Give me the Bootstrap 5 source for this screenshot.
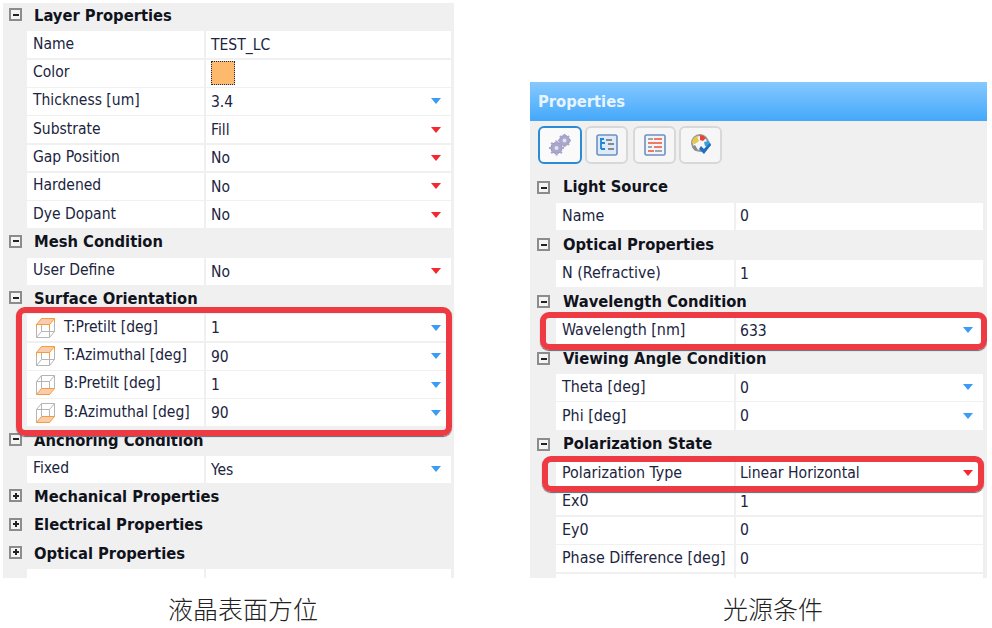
<!DOCTYPE html>
<html lang="en">
<head>
  <meta charset="UTF-8">
  <title>Properties</title>
  <link href="https://cdn.jsdelivr.net/npm/bootstrap@5.3.3/dist/css/bootstrap.min.css" rel="stylesheet">
  <style>
    body { width: 992px; height: 628px; overflow: hidden; background: #fff; color: #1b2440; font-family: "DejaVu Sans Condensed", "DejaVu Sans", sans-serif; font-size: 15.5px; }
    .left-col { width: 451px; margin: 3px 0 0 3px; }
    .right-col { width: 457px; margin: 82px 0 0 76px; }
    .grid-panel { background: #f0f0f0; overflow: hidden; position: relative; }
    .left-col .grid-panel { height: 575px; padding: 0 3px 0 24px; }
    .right-col .grid-panel { height: 496px; padding: 0 4px 0 26px; }
    .prop-head, .prop-row { height: 28.32px; }
    .right-col .prop-head, .right-col .prop-row { height: 28.55px; }
    .prop-head { position: relative; font-weight: 700; color: #10131c; font-size: 16.4px; padding: 0 0 2px 7px; }
    .right-col .prop-head { padding-bottom: 1px; }
    .prop-row { padding-bottom: 1.4px; }
    .prop-name { width: 177px; background: #fff; padding: 0 0 1px 6px; height: 100%; }
    .prop-val { flex: 1; margin-left: 2px; background: #fff; padding: 2px 10px 0 5px; height: 100%; }
    .right-col .prop-name { width: 178px; font-size: 15.9px; }
    .right-col .prop-val { padding-left: 4px; font-size: 15.6px; }
    .expander { position: absolute; left: -18px; top: 5px; width: 13px; height: 13px; border: 2px solid #8c8c8c; background: #f4f4f4; }
    .right-col .expander { left: -19px; top: 7px; }
    .expander::before { content: ""; position: absolute; left: 1.5px; right: 1.5px; top: 3.5px; height: 2px; background: #222; }
    .expander.closed::after { content: ""; position: absolute; left: 3.5px; top: 1.5px; bottom: 1.5px; width: 2px; background: #222; }
    .drop-blue, .drop-red { width: 0; height: 0; border-left: 5.5px solid transparent; border-right: 5.5px solid transparent; margin: 0 0 2px auto; }
    .drop-blue { border-top: 6px solid #3a9cf6; }
    .drop-red { border-top: 6px solid #f6282e; }
    .swatch { width: 24px; height: 24px; margin-top: -2px; background: #fdb96c; border: 1px dotted #1d2a55; }
    .cube { width: 21px; height: 22px; margin: 1px 8px 0 2px; flex: none; }
    .panel-title { height: 39px; background: linear-gradient(#86c9ff, #44a8fb); color: #e8f4ff; font-weight: 700; font-size: 16.4px; padding: 2px 0 0 8px; margin: 0 -4px 0 -26px; }
    .tool-strip { height: 53px; margin-left: -18px; padding-top: 5px; gap: 3px; }
    .tool-btn { width: 43px; height: 38px; background: #f6f6f6; border: 2px solid #d8d8d8; border-radius: 6px; }
    .tool-btn.on { width: 44px; background: #fafafa; border-color: #2a8bd8; }
    .tool-gap { margin-left: 2px; }
    .red-frame { position: absolute; border: 6.5px solid #ee3a43; border-radius: 9px; box-shadow: 0 1px 1px #667; pointer-events: none; }
    .frame-a { left: 13px; top: 304px; width: 436px; height: 129px; }
    .frame-b { left: 10px; top: 230px; width: 447px; height: 38px; }
    .frame-c { left: 12px; top: 374px; width: 442px; height: 36px; }
    .img-caption { font-family: "Liberation Serif", "Noto Sans CJK SC", serif; font-weight: 300; font-size: 25px; line-height: 1; color: #222; text-align: center; margin-top: 20px; padding-left: 29px; }
  </style>
</head>
<body>
<div class="d-flex">

  <div class="left-col">
    <div class="grid-panel">
      <div class="prop-head d-flex align-items-center"><span class="expander"></span>Layer Properties</div>
      <div class="prop-row d-flex"><div class="prop-name d-flex align-items-center">Name</div><div class="prop-val d-flex align-items-center">TEST_LC</div></div>
      <div class="prop-row d-flex"><div class="prop-name d-flex align-items-center">Color</div><div class="prop-val d-flex align-items-center"><span class="swatch"></span></div></div>
      <div class="prop-row d-flex"><div class="prop-name d-flex align-items-center">Thickness [um]</div><div class="prop-val d-flex align-items-center">3.4<span class="drop-blue"></span></div></div>
      <div class="prop-row d-flex"><div class="prop-name d-flex align-items-center">Substrate</div><div class="prop-val d-flex align-items-center">Fill<span class="drop-red"></span></div></div>
      <div class="prop-row d-flex"><div class="prop-name d-flex align-items-center">Gap Position</div><div class="prop-val d-flex align-items-center">No<span class="drop-red"></span></div></div>
      <div class="prop-row d-flex"><div class="prop-name d-flex align-items-center">Hardened</div><div class="prop-val d-flex align-items-center">No<span class="drop-red"></span></div></div>
      <div class="prop-row d-flex"><div class="prop-name d-flex align-items-center">Dye Dopant</div><div class="prop-val d-flex align-items-center">No<span class="drop-red"></span></div></div>
      <div class="prop-head d-flex align-items-center"><span class="expander"></span>Mesh Condition</div>
      <div class="prop-row d-flex"><div class="prop-name d-flex align-items-center">User Define</div><div class="prop-val d-flex align-items-center">No<span class="drop-red"></span></div></div>
      <div class="prop-head d-flex align-items-center"><span class="expander"></span>Surface Orientation</div>
      <div class="prop-row d-flex"><div class="prop-name d-flex align-items-center">
        <svg class="cube" viewBox="0 0 21 22" fill="none" stroke-width="1"><path d="M1.5 7.5h13v13h-13zM6.5 1.5v13M1.5 20.5l5-6h13M14.5 20.5l5-6V1.5" stroke="#b5b5b5"/><path d="M1.5 7.5l5-6h13l-5 6z" fill="#f6cdb0" stroke="#fb9a3c"/><path d="M1.5 7.5v4M14.5 7.5v4M19.5 1.5v4" stroke="#fb9a3c"/></svg>
        T:Pretilt [deg]</div><div class="prop-val d-flex align-items-center">1<span class="drop-blue"></span></div></div>
      <div class="prop-row d-flex"><div class="prop-name d-flex align-items-center">
        <svg class="cube" viewBox="0 0 21 22" fill="none" stroke-width="1"><path d="M1.5 7.5h13v13h-13zM6.5 1.5v13M1.5 20.5l5-6h13M14.5 20.5l5-6V1.5" stroke="#b5b5b5"/><path d="M1.5 7.5l5-6h13l-5 6z" fill="#f6cdb0" stroke="#fb9a3c"/><path d="M1.5 7.5v4M14.5 7.5v4M19.5 1.5v4" stroke="#fb9a3c"/></svg>
        T:Azimuthal [deg]</div><div class="prop-val d-flex align-items-center">90<span class="drop-blue"></span></div></div>
      <div class="prop-row d-flex"><div class="prop-name d-flex align-items-center">
        <svg class="cube" viewBox="0 0 21 22" fill="none" stroke-width="1"><path d="M1.5 7.5h13v13M1.5 20.5v-13l5-6h13v13M6.5 1.5v13M14.5 7.5l5-6" stroke="#b5b5b5"/><path d="M1.5 20.5l5-6h13l-5 6z" fill="#f6cdb0" stroke="#fb9a3c"/></svg>
        B:Pretilt [deg]</div><div class="prop-val d-flex align-items-center">1<span class="drop-blue"></span></div></div>
      <div class="prop-row d-flex"><div class="prop-name d-flex align-items-center">
        <svg class="cube" viewBox="0 0 21 22" fill="none" stroke-width="1"><path d="M1.5 7.5h13v13M1.5 20.5v-13l5-6h13v13M6.5 1.5v13M14.5 7.5l5-6" stroke="#b5b5b5"/><path d="M1.5 20.5l5-6h13l-5 6z" fill="#f6cdb0" stroke="#fb9a3c"/></svg>
        B:Azimuthal [deg]</div><div class="prop-val d-flex align-items-center">90<span class="drop-blue"></span></div></div>
      <div class="prop-head d-flex align-items-center"><span class="expander"></span>Anchoring Condition</div>
      <div class="prop-row d-flex"><div class="prop-name d-flex align-items-center">Fixed</div><div class="prop-val d-flex align-items-center">Yes<span class="drop-blue"></span></div></div>
      <div class="prop-head d-flex align-items-center"><span class="expander closed"></span>Mechanical Properties</div>
      <div class="prop-head d-flex align-items-center"><span class="expander closed"></span>Electrical Properties</div>
      <div class="prop-head d-flex align-items-center"><span class="expander closed"></span>Optical Properties</div>
      <div class="prop-row d-flex"><div class="prop-name"></div><div class="prop-val"></div></div>
      <div class="red-frame frame-a"></div>
    </div>
    <div class="img-caption">液晶表面方位</div>
  </div>

  <div class="right-col">
    <div class="grid-panel">
      <div class="panel-title d-flex align-items-center">Properties</div>
      <div class="tool-strip d-flex">
        <div class="tool-btn on d-flex align-items-center justify-content-center">
          <svg width="24" height="24" viewBox="0 0 24 24"><g fill="#a9a7cc" stroke="#8f8db5" stroke-width="1"><circle cx="8.5" cy="15" r="5.5"/><circle cx="16.5" cy="7.5" r="5"/></g><g stroke="#a9a7cc" stroke-width="2.2"><path d="M8.5 7.5v15M1 15h15M3.2 9.7l10.6 10.6M13.8 9.7L3.2 20.3M16.5 1v13M10 7.5h13M12 3l9 9M21 3l-9 9"/></g><circle cx="8.5" cy="15" r="2" fill="#e4e4f0"/><circle cx="16.5" cy="7.5" r="2" fill="#e4e4f0"/></svg>
        </div>
        <div class="tool-btn d-flex align-items-center justify-content-center">
          <svg width="22" height="22" viewBox="0 0 22 22" fill="none"><rect x="1" y="1" width="20" height="20" rx="2" fill="#dcebfa" stroke="#6f8fc4" stroke-width="1.6"/><path d="M5 5v10M5 9h4M5 15h4" stroke="#1f86d8" stroke-width="1.8"/><path d="M4 5h4" stroke="#1f86d8" stroke-width="2"/><path d="M10 6h6M12 10h6M12 15h6" stroke="#8a8a8a" stroke-width="2"/></svg>
        </div>
        <div class="tool-btn tool-gap d-flex align-items-center justify-content-center">
          <svg width="22" height="22" viewBox="0 0 22 22" fill="none"><rect x="1" y="1" width="20" height="20" rx="1.5" fill="#f1f5fb" stroke="#6f8fc4" stroke-width="1.6"/><path d="M4 5h5M4 13h4M11 17h7" stroke="#8a8a8a" stroke-width="1.6"/><path d="M10 5h8M4 9h14M10 13h8M4 17h6" stroke="#f0522f" stroke-width="1.6"/></svg>
        </div>
        <div class="tool-btn d-flex align-items-center justify-content-center">
          <svg width="24" height="24" viewBox="0 0 24 24" fill="none"><circle cx="11" cy="10" r="8" stroke="#9a9a9a" stroke-width="2"/><path d="M3 10a8 8 0 0 1 5-7l2 5-4 3z" fill="#e8c84a"/><path d="M11 2a8 8 0 0 1 6 3l-3 3-3-1z" fill="#ee4136"/><path d="M6 12l3 5-3 1-3-4z" fill="#8c8c8c"/><path d="M15 9l5-1 2 4-2 2-4-1z" fill="#3aa0dc"/><path d="M12 13l3 3 6-6 1 2-7 9-5-5z" fill="#1f6fc0"/></svg>
        </div>
      </div>
      <div class="prop-head d-flex align-items-center"><span class="expander"></span>Light Source</div>
      <div class="prop-row d-flex"><div class="prop-name d-flex align-items-center">Name</div><div class="prop-val d-flex align-items-center">0</div></div>
      <div class="prop-head d-flex align-items-center"><span class="expander"></span>Optical Properties</div>
      <div class="prop-row d-flex"><div class="prop-name d-flex align-items-center">N (Refractive)</div><div class="prop-val d-flex align-items-center">1</div></div>
      <div class="prop-head d-flex align-items-center"><span class="expander"></span>Wavelength Condition</div>
      <div class="prop-row d-flex"><div class="prop-name d-flex align-items-center">Wavelength [nm]</div><div class="prop-val d-flex align-items-center">633<span class="drop-blue"></span></div></div>
      <div class="prop-head d-flex align-items-center"><span class="expander"></span>Viewing Angle Condition</div>
      <div class="prop-row d-flex"><div class="prop-name d-flex align-items-center">Theta [deg]</div><div class="prop-val d-flex align-items-center">0<span class="drop-blue"></span></div></div>
      <div class="prop-row d-flex"><div class="prop-name d-flex align-items-center">Phi [deg]</div><div class="prop-val d-flex align-items-center">0<span class="drop-blue"></span></div></div>
      <div class="prop-head d-flex align-items-center"><span class="expander"></span>Polarization State</div>
      <div class="prop-row d-flex"><div class="prop-name d-flex align-items-center">Polarization Type</div><div class="prop-val d-flex align-items-center">Linear Horizontal<span class="drop-red"></span></div></div>
      <div class="prop-row d-flex"><div class="prop-name d-flex align-items-center">Ex0</div><div class="prop-val d-flex align-items-center">1</div></div>
      <div class="prop-row d-flex"><div class="prop-name d-flex align-items-center">Ey0</div><div class="prop-val d-flex align-items-center">0</div></div>
      <div class="prop-row d-flex"><div class="prop-name d-flex align-items-center">Phase Difference [deg]</div><div class="prop-val d-flex align-items-center">0</div></div>
      <div class="prop-row d-flex"><div class="prop-name"></div><div class="prop-val"></div></div>
      <div class="red-frame frame-b"></div>
      <div class="red-frame frame-c"></div>
    </div>
    <div class="img-caption">光源条件</div>
  </div>

</div>
<script src="https://cdn.jsdelivr.net/npm/bootstrap@5.3.3/dist/js/bootstrap.bundle.min.js"></script>
</body>
</html>
